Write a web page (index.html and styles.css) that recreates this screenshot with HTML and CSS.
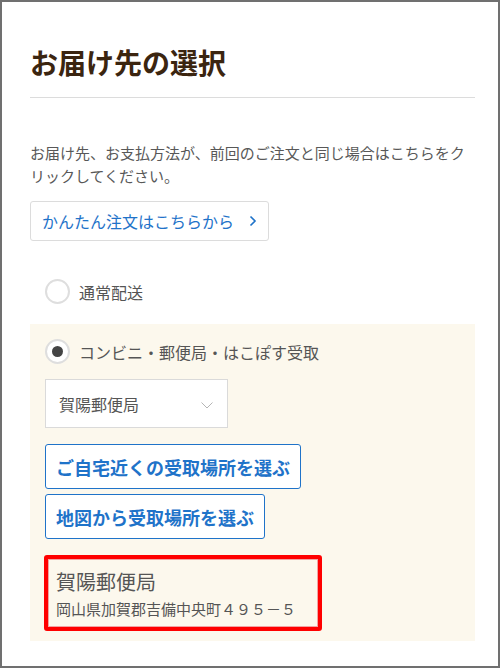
FILE: index.html
```html
<!DOCTYPE html>
<html lang="ja">
<head>
<meta charset="utf-8">
<title>お届け先の選択</title>
<link rel="stylesheet" href="styles.css">
</head>
<body>
<div class="frame">
  <main class="page">
    <header class="page-head">
      <h1 class="title">お届け先の選択</h1>
    </header>

    <p class="lead">お届け先、お支払方法が、前回のご注文と同じ場合はこちらをクリックしてください。</p>

    <a class="quick-btn" href="#">
      <span>かんたん注文はこちらから</span>
      <svg class="quick-chev" width="8" height="12" viewBox="0 0 8 12"><path d="M1.5 1.5 L6 6 L1.5 10.5" fill="none" stroke="#1f73c9" stroke-width="1.6"/></svg>
    </a>

    <div class="option">
      <span class="radio"></span>
      <span class="option-label">通常配送</span>
    </div>

    <section class="panel">
      <div class="option">
        <span class="radio checked"></span>
        <span class="option-label">コンビニ・郵便局・はこぽす受取</span>
      </div>

      <div class="select">
        <span>賀陽郵便局</span>
        <svg class="select-chev" width="12" height="7" viewBox="0 0 12 7"><path d="M0.5 0.5 L6 6 L11.5 0.5" fill="none" stroke="#b5b5b5" stroke-width="1"/></svg>
      </div>

      <div class="actions">
        <a class="pick-btn" href="#">ご自宅近くの受取場所を選ぶ</a>
        <a class="pick-btn" href="#">地図から受取場所を選ぶ</a>
      </div>

      <div class="place">
        <div class="place-name">賀陽郵便局</div>
        <div class="place-addr">岡山県加賀郡吉備中央町４９５－５</div>
      </div>
    </section>
  </main>
</div>
</body>
</html>
```
FILE: styles.css
```css
* {
  box-sizing: border-box;
}

html,
body {
  margin: 0;
  height: 100%;
}

body {
  font-family: "Noto Sans CJK JP", "Noto Sans", sans-serif;
  color: #555;
  background: #fff;
}

.frame {
  height: 100%;
  border: 2px solid #707070;
  overflow: hidden;
}

.page {
  padding: 40px 23px 0 28px;
}

.page-head {
  padding-bottom: 15px;
  border-bottom: 1px solid #dcdcdc;
}

.title {
  margin: 0;
  font-size: 28px;
  line-height: 40px;
  font-weight: 700;
  color: #3b2510;
}

.lead {
  margin: 43px 0 0;
  font-size: 15px;
  line-height: 23px;
  color: #585858;
}

.quick-btn {
  margin-top: 14px;
  display: inline-flex;
  align-items: center;
  height: 40px;
  width: 239px;
  padding: 0 0 0 11px;
  border: 1px solid #dcdcdc;
  border-radius: 3px;
  background: #fff;
  font-size: 16px;
  color: #1f73c9;
  text-decoration: none;
}

.quick-chev {
  margin-left: 15px;
}

.option {
  display: flex;
  align-items: center;
  gap: 9px;
  margin: 38px 0 0 15px;
  height: 25px;
}

.radio {
  width: 25px;
  height: 25px;
  border: 2px solid #dedede;
  border-radius: 50%;
  background: #fff;
  display: flex;
  align-items: center;
  justify-content: center;
  flex: none;
}

.radio.checked::after {
  content: "";
  width: 11px;
  height: 11px;
  border-radius: 50%;
  background: #444;
}

.option-label {
  font-size: 16px;
  color: #555;
}

.panel {
  margin-top: 20px;
  padding: 15px 15px 10px;
  background: #fcf8ed;
}

.panel .option {
  margin: 0;
}

.select {
  margin-top: 15px;
  width: 183px;
  height: 49px;
  padding: 0 14px 0 13px;
  display: flex;
  align-items: center;
  justify-content: space-between;
  border: 1px solid #dadada;
  background: #fff;
  font-size: 16px;
  color: #555;
}

.select-chev {
  margin-top: 4px;
}

.actions {
  margin-top: 16px;
  display: flex;
  flex-direction: column;
  align-items: flex-start;
  gap: 5px;
}

.pick-btn {
  height: 45px;
  padding: 0 10px;
  display: flex;
  align-items: center;
  border: 1px solid #1f73c9;
  border-radius: 3px;
  background: #fff;
  font-size: 18px;
  font-weight: 700;
  color: #1f73c9;
  text-decoration: none;
}

.place {
  margin: 16px 0 0 -1px;
  width: 278px;
  padding: 9px 8px 7px;
  border: 4px solid #ff0000;
  border-radius: 3px;
  box-shadow: inset 0 0 0 1px #f2a3a3;
}

.place-name {
  font-size: 20px;
  line-height: 28px;
  color: #555;
}

.place-addr {
  margin-top: 2px;
  font-size: 15px;
  line-height: 22px;
  color: #555;
}
```
